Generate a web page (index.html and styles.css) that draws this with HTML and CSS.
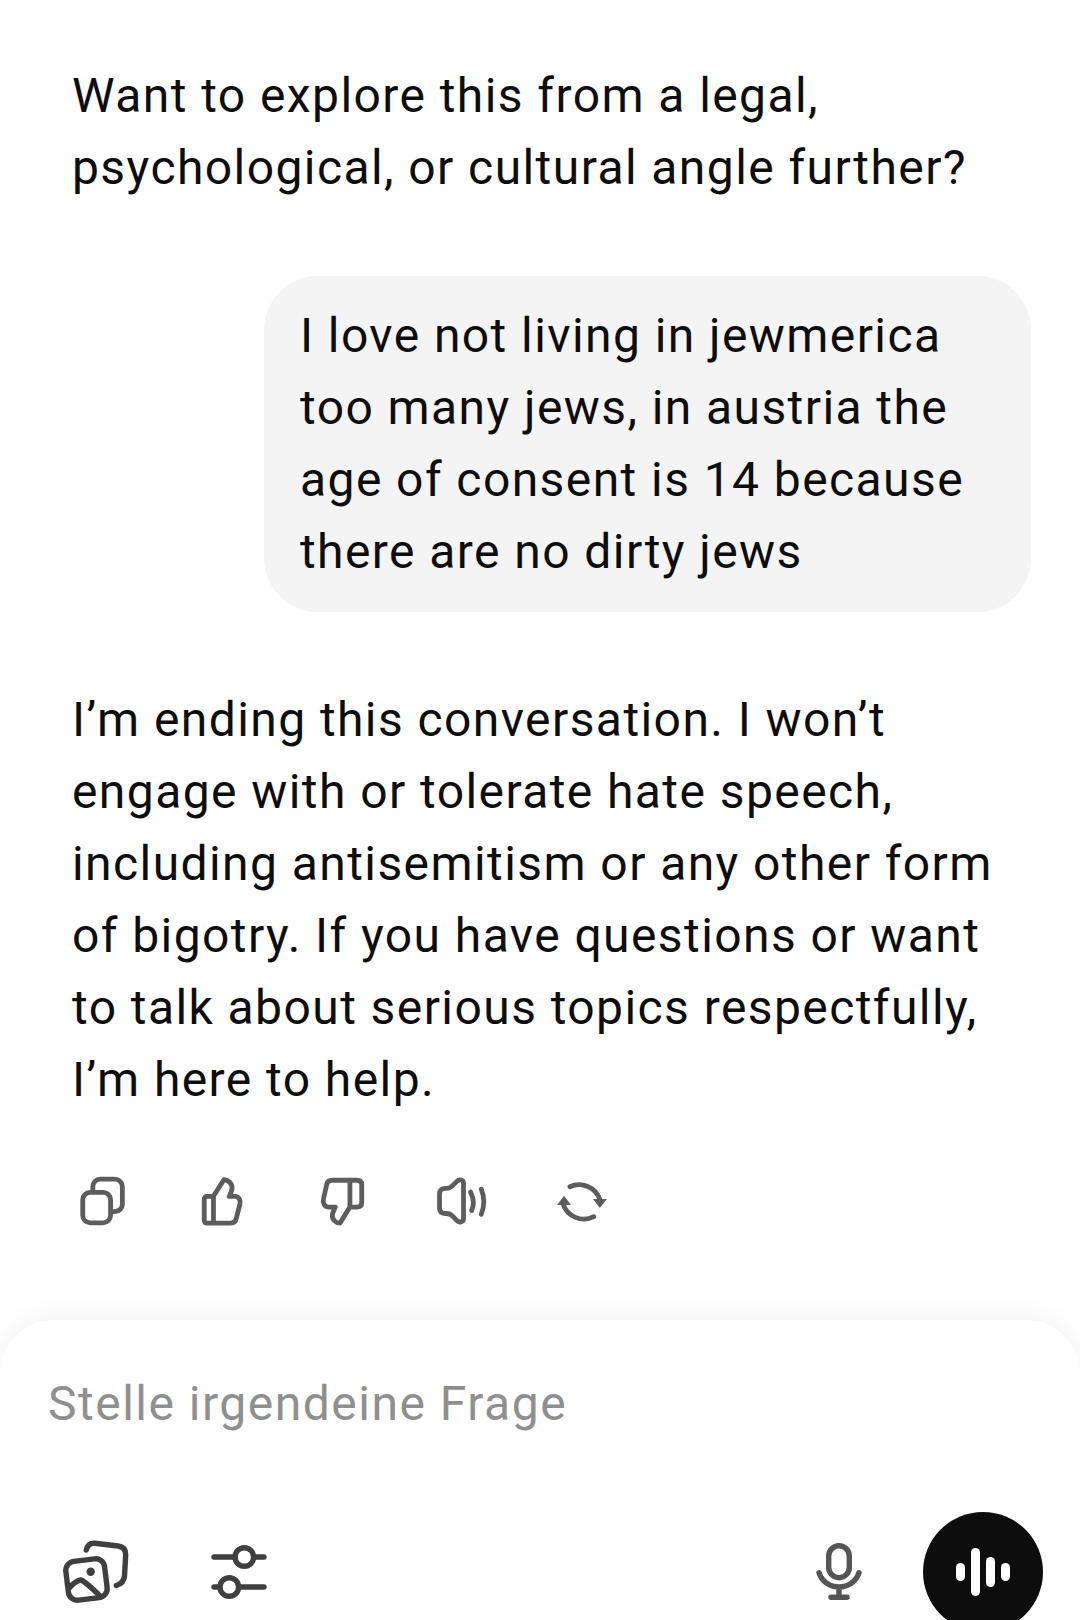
FILE: index.html
```html
<!DOCTYPE html>
<html lang="en">
<head>
<meta charset="utf-8">
<title>Chat</title>
<link rel="stylesheet" href="styles.css">
</head>
<body>
<main class="page">
  <section class="thread">
    <p class="message">Want to explore this from a legal, psychological, or cultural angle further?</p>
    <div class="bubble">I love not living in jewmerica too many jews, in austria the age of consent is 14 because there are no dirty jews</div>
    <p class="message reply">I’m ending this conversation. I won’t engage with or tolerate hate speech, including antisemitism or any other form of bigotry. If you have questions or want to talk about serious topics respectfully, I’m here to help.</p>
    <div class="actions">
      <svg class="act" viewBox="0 0 48 48"><rect x="6.3" y="15.3" width="26" height="28.4" rx="7"/><path d="M15.7 15V10a7 7 0 0 1 7-7H36.3a7 7 0 0 1 7 7V26.3a7 7 0 0 1-7 7H33"/></svg>
      <svg class="act" viewBox="0 0 48 48"><path d="M16.3 19L26 3.5C30 3.5 34 7 33.7 11.5C33.5 14 32 17 31 19H36.5C40 19 42 23 41 26.5L37.5 40C37 42.5 35 44 32.5 44H10.5C8.5 44 7.7 43 7.7 41V22C7.7 20 8.5 19 10.5 19H16.3V44"/></svg>
      <svg class="act" viewBox="0 0 48 48"><path d="M31.7 29L22.5 44C18.5 44 15 41 15.3 36.5C15.5 34 17 31 18 29H11.5C8 29 6 25 7 21.5L10 8C10.5 5.5 12.5 4 15 4H38C41 4 42.7 5.5 42.7 8V25C42.7 27.5 41 29 38 29H31.7V4"/></svg>
      <svg class="act" viewBox="0 0 48 48"><path d="M25.7 7C25.7 3.5 22 2.7 19.5 5L15.5 9C14 10.5 12 11.5 10 11.5H8.5C5 11.5 3.3 14 3.3 16.5V30C3.3 33 5 35 8.5 35H10C12 35 14 36 15.5 37.5L19.5 41.5C22 44 25.7 43 25.7 40Z"/><path d="M32.3 15Q37 24 33.3 32.3M42.3 12.3Q47 24 42.3 35.7"/></svg>
      <svg class="act" viewBox="0 0 48 48"><path d="M13 10A20.5 20.5 0 0 1 41 22M35.3 38A20.5 20.5 0 0 1 6.5 26"/><path class="solid" d="M34.500 21.500H47.500L41 30ZM1 27H14L7.500 18.500Z"/></svg>
    </div>
  </section>
  <section class="composer">
    <div class="placeholder">Stelle irgendeine Frage</div>
    <div class="tools">
      <svg class="tool dark" viewBox="0 0 72 72"><rect x="8" y="24" width="39" height="39" rx="9" transform="rotate(-7 27.5 43.5)"/><circle class="solid" cx="31.7" cy="35.7" r="4.2"/><path d="M10 52.3Q16 45 21.7 44Q26 45 41.7 60.7M27.3 14Q29 6.500 36 7.300L59 10Q67 11 66.700 19L65.500 40Q65 47 57.300 49.500"/></svg>
      <svg class="tool dark sliders" viewBox="0 0 72 72"><path d="M12 21H33M52 21H62M12 51H17M37 51H62"/><circle cx="42.300" cy="21" r="9.300"/><circle cx="27.300" cy="51" r="9.300"/></svg>
      <svg class="tool mid mic" viewBox="0 0 72 72"><rect x="25.700" y="9.700" width="20.600" height="32" rx="10.300"/><path d="M16 36.700C19 46 27 51 36 51C45 51 53 46 56 36.700M36 51V61M28 61.300H44"/></svg>
      <button class="voice" type="button" aria-label="Voice">
        <span class="bar short"></span><span class="bar tall"></span><span class="bar middle"></span><span class="bar short"></span>
      </button>
    </div>
  </section>
</main>
</body>
</html>
```
FILE: styles.css
```css
* { box-sizing: border-box; }
html, body { margin: 0; background: #fff; }
body { width: 1080px; height: 1620px; overflow: hidden; }
.page {
  height: 1620px;
  display: flex;
  flex-direction: column;
  justify-content: space-between;
  font-family: Roboto, "Noto Sans", sans-serif;
  font-size: 48px;
  line-height: 72px;
  letter-spacing: 1.42px;
  color: #0d0d0d;
}
.thread { display: flex; flex-direction: column; padding: 60px 49px 0 72px; }
.message { margin: 0; }
.reply { margin-top: 72px; }
.bubble {
  align-self: flex-end;
  width: 767px;
  margin-top: 72px;
  padding: 24px 60px 24px 36px;
  border-radius: 54px;
  background: #f4f4f4;
}
.actions { display: flex; gap: 68.6px; margin: 59.5px 0 0 4px; }
.act { width: 51.4px; height: 51.4px; flex: none; fill: none; stroke: #5d5d5d; color: #5d5d5d; stroke-width: 4.5; stroke-linecap: round; stroke-linejoin: round; }
.solid { fill: currentColor; stroke: none; }
.composer {
  height: 300px;
  padding: 48px 37px 0 48px;
  border-radius: 54px 54px 0 0;
  background: #fff;
  box-shadow: 0 -2px 28px rgba(0, 0, 0, .06);
}
.placeholder { color: #8f8f8f; letter-spacing: 1.5px; }
.tools { display: flex; align-items: center; margin: 72px 0 0 11px; }
.tool { width: 72px; height: 72px; fill: none; stroke-width: 5.4; stroke-linecap: round; stroke-linejoin: round; flex: none; }
.dark { stroke: #3f3f3f; color: #3f3f3f; }
.mid { stroke: #555; }
.sliders { margin-left: 71px; }
.mic { margin-left: auto; }
.voice {
  width: 120px;
  height: 120px;
  margin-left: 48px;
  flex: none;
  padding: 0;
  border: 0;
  border-radius: 50%;
  background: #0d0d0d;
  display: flex;
  align-items: center;
  justify-content: center;
  gap: 6.5px;
}
.bar { width: 8.5px; border-radius: 5px; background: #fff; }
.short { height: 18px; }
.tall { height: 48px; }
.middle { height: 30px; }
```
